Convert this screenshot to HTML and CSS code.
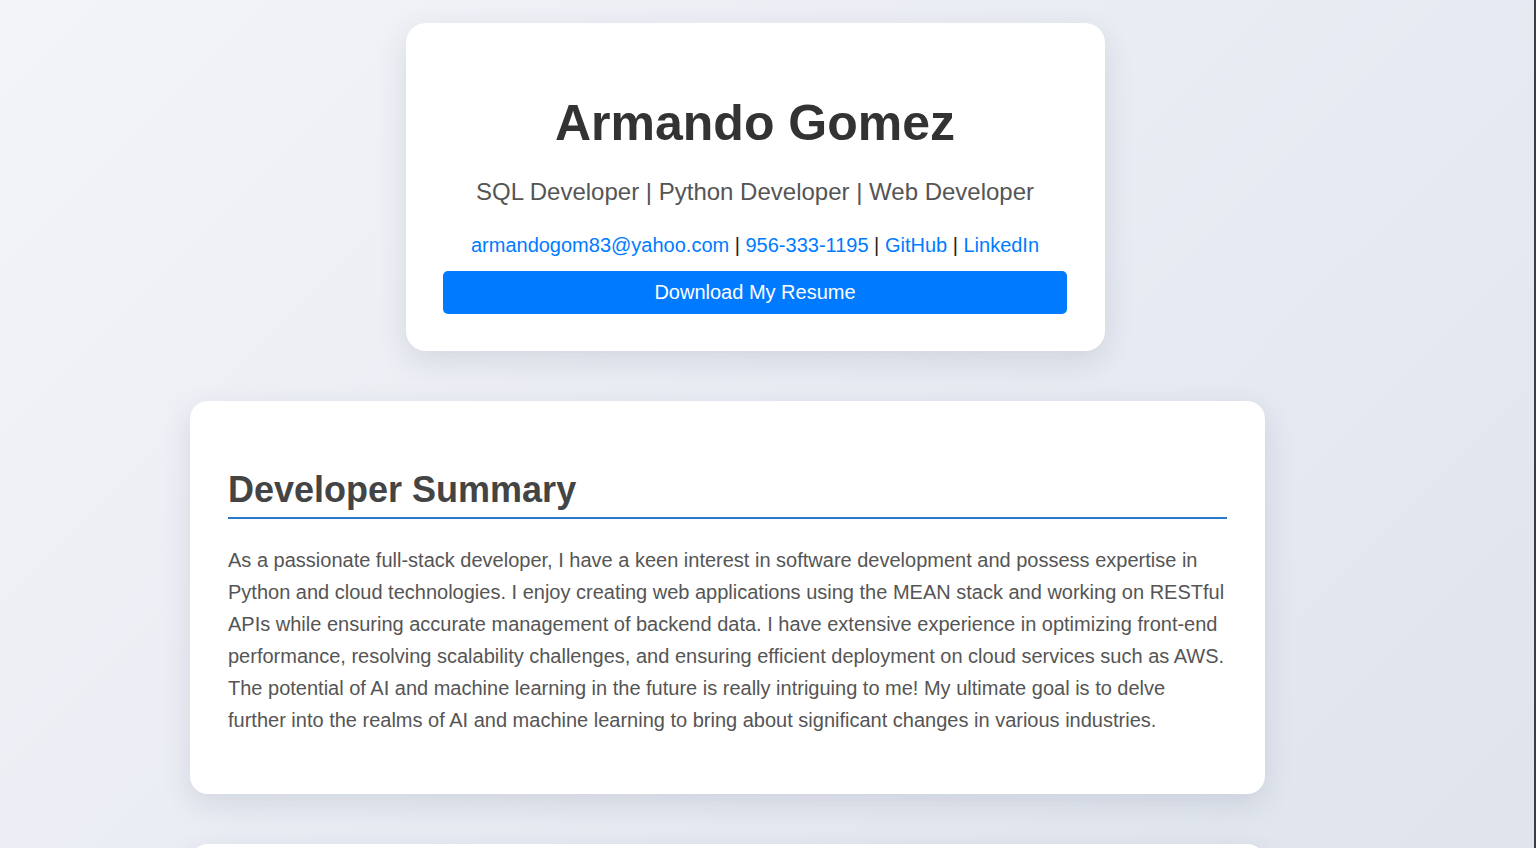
FILE: index.html
```html
<!DOCTYPE html>
<html lang="en">
<head>
<meta charset="utf-8">
<title>Armando Gomez</title>
<link rel="stylesheet" href="styles.css">
</head>
<body>
<div class="page">
  <header class="card hero">
    <h1 class="hero-name">Armando Gomez</h1>
    <p class="hero-role">SQL Developer | Python Developer | Web Developer</p>
    <p class="hero-contact"><a href="#">armandogom83@yahoo.com</a> | <a href="#">956-333-1195</a> | <a href="#">GitHub</a> | <a href="#">LinkedIn</a></p>
    <a class="btn" href="#">Download My Resume</a>
  </header>

  <section class="card section">
    <h2 class="section-title">Developer Summary</h2>
    <p class="section-text">As a passionate full-stack developer, I have a keen interest in software development and possess expertise in Python and cloud technologies. I enjoy creating web applications using the MEAN stack and working on RESTful APIs while ensuring accurate management of backend data. I have extensive experience in optimizing front-end performance, resolving scalability challenges, and ensuring efficient deployment on cloud services such as AWS. The potential of AI and machine learning in the future is really intriguing to me! My ultimate goal is to delve further into the realms of AI and machine learning to bring about significant changes in various industries.</p>
  </section>

  <section class="card section">
    <h2 class="section-title">Technical Skills</h2>
    <p class="section-text">SQL, Python, JavaScript, HTML, CSS, Node.js, Express, Angular, MongoDB, AWS.</p>
  </section>
</div>
</body>
</html>
```

FILE: styles.css
```css
html, body {
  margin: 0;
  padding: 0;
}

body {
  font-family: "Liberation Sans", Arial, sans-serif;
  background: linear-gradient(135deg, #f3f4f8 0%, #e9ecf3 50%, #dfe4ed 100%);
  background-attachment: fixed;
  min-height: 100vh;
}

.page {
  width: 1536px;
  border-right: 2px solid #3b3e43;
  min-height: 100vh;
  padding: 23px 0 40px;
  box-sizing: border-box;
  display: flex;
  flex-direction: column;
  gap: 50px;
}

.card {
  background: #ffffff;
  border-radius: 20px;
  box-shadow: 0 10px 30px rgba(40, 50, 80, 0.12);
  box-sizing: border-box;
}

.hero {
  margin-left: 406px;
  width: 699px;
  padding: 37px 38px 37px 37px;
  text-align: center;
  display: flex;
  flex-direction: column;
}

.hero-name {
  margin: 34px 0 0;
  font-size: 50px;
  line-height: 58px;
  font-weight: bold;
  color: #333333;
}

.hero-role {
  margin: 26px 0 0;
  font-size: 24px;
  line-height: 28px;
  color: #555555;
}

.hero-contact {
  margin: 28px 0 0;
  font-size: 20px;
  line-height: 23px;
  color: #222222;
}

.hero-contact a {
  color: #007bff;
  text-decoration: none;
}

.btn {
  margin-top: 14px;
  height: 43px;
  display: flex;
  align-items: center;
  justify-content: center;
  background: #007bff;
  color: #ffffff;
  font-size: 20px;
  text-decoration: none;
  border-radius: 5px;
}

.section {
  margin-left: 190px;
  width: 1075px;
  padding: 38px;
  border-radius: 18px;
}

.section-title {
  margin: 30px 0 0;
  padding-bottom: 7px;
  font-size: 36px;
  line-height: 41px;
  font-weight: bold;
  color: #444444;
  border-bottom: 2px solid #2a7acb;
}

.section-text {
  margin: 25px 0 20px;
  font-size: 20px;
  line-height: 32px;
  color: #555555;
}
```
